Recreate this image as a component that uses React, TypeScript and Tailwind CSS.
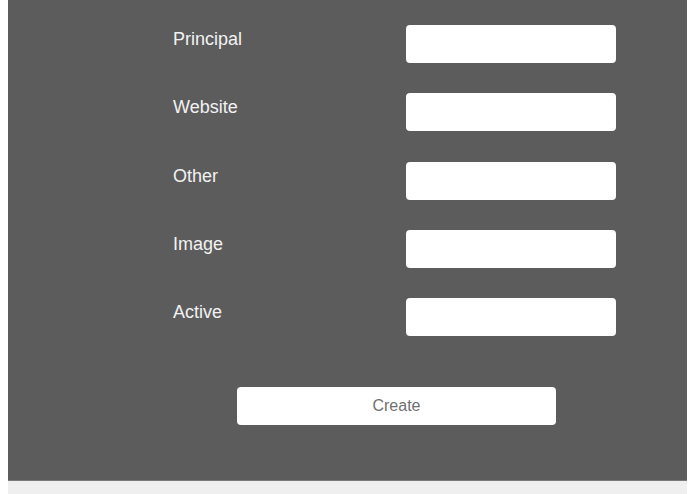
import React from "react";

const fields = ["Principal", "Website", "Other", "Image", "Active"];

export default function App() {
  return (
    <div className="w-[695px] h-[494px] bg-white px-2 flex flex-col" style={{ fontFamily: '"Liberation Sans", Arial, sans-serif' }}>
      <div className="h-[481px] bg-[#5c5c5c] border-b border-[#7a7a7a] pl-[165px] pt-[25px] flex flex-col">
        <div className="flex flex-col gap-[30.3px]">
          {fields.map((f) => (
            <div key={f} className="flex items-start">
              <label className="w-[233px] pt-[1px] text-[18px] text-[#f2f2f2]">{f}</label>
              <input className="w-[210px] h-[38px] bg-white rounded-[4px] outline-none" />
            </div>
          ))}
        </div>
        <button className="mt-[51px] ml-[64px] w-[319px] h-[38px] bg-white rounded-[4px] text-[16px] text-[#707070]">
          Create
        </button>
      </div>
      <div className="flex-1 bg-[#efefef]" />
    </div>
  );
}
